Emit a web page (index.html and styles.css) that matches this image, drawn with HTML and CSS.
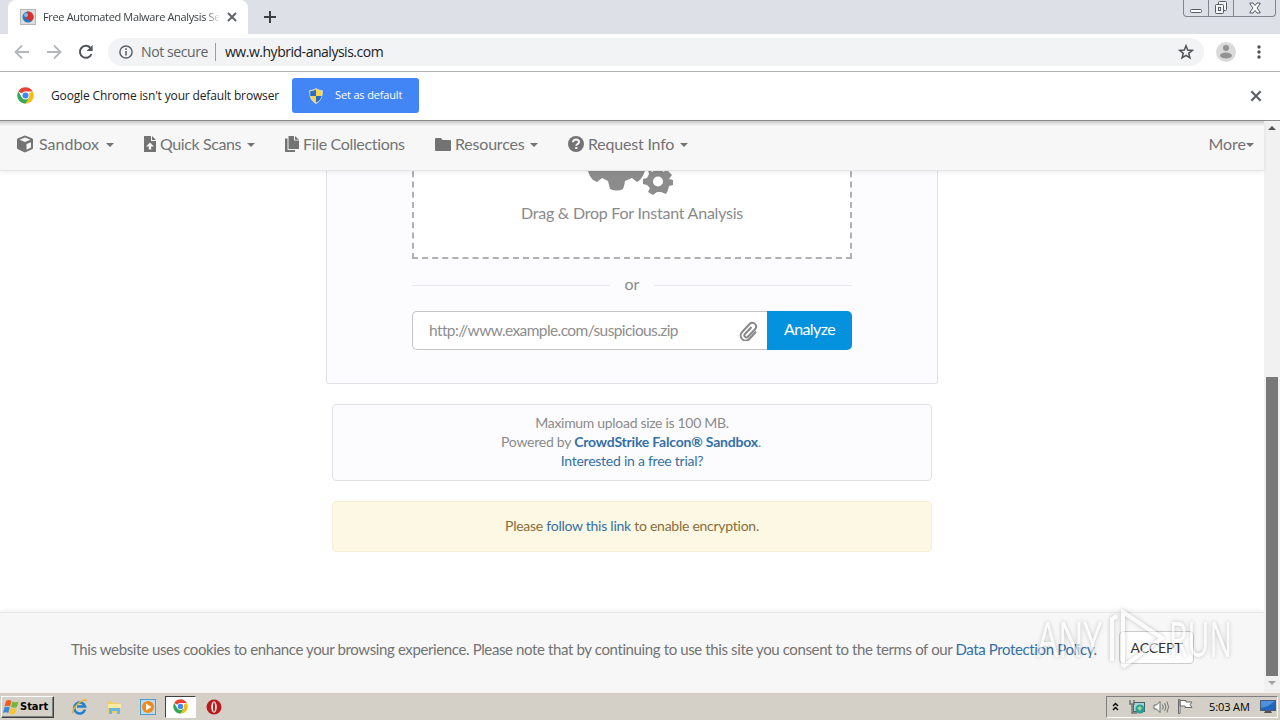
FILE: index.html
```html
<!DOCTYPE html>
<html lang="en">
<head>
  <meta charset="UTF-8" />
  <title>Free Automated Malware Analysis Service</title>
  <link rel="stylesheet" href="styles.css">
</head>
<body>
  <svg class="defs" width="0" height="0">
    <symbol id="chrome" viewBox="0 0 48 48">
      <circle cx="24" cy="24" r="23" fill="#fff"/>
      <path d="M24 24 4 12.500A23 23 0 0 1 44 12.500H24Z" fill="#ea4335"/>
      <path d="M24 24 44 12.500A23 23 0 0 1 24 47L34 30Z" fill="#fbbc05"/>
      <path d="M24 24 34 30 24 47A23 23 0 0 1 4 12.500L14 30Z" fill="#34a853"/>
      <circle cx="24" cy="24" r="11" fill="#fff"/>
      <circle cx="24" cy="24" r="8.500" fill="#4285f4"/>
    </symbol>
    <symbol id="close" viewBox="0 0 12 12">
      <path d="M2 2 10 10M10 2 2 10" stroke="#5f6368" stroke-width="1.900"/>
    </symbol>
  </svg>

  <div class="browser">
    <div class="tab-strip">
      <div class="tab">
        <svg class="favicon" viewBox="0 0 16 16">
          <rect x=".5" y=".5" width="15" height="15" fill="#dedcdc" stroke="#b9b5b5"/>
          <circle cx="8" cy="8" r="5.500" fill="#2479c4"/>
          <path d="M7 2.500a5.500 5.500 0 0 1 4 10c-1-2-5-2-6-4.500 2 1 4-1 2-5.500Z" fill="#d9302c"/>
          <circle cx="6" cy="6" r="2" fill="#79c0ec"/>
        </svg>
        <span class="tab-title">Free Automated Malware Analysis Se</span>
        <svg class="tab-close" viewBox="0 0 12 12"><use href="#close"/></svg>
      </div>
      <svg class="new-tab" viewBox="0 0 12 12"><path d="M6 0V12M0 6H12" stroke="#3c4043" stroke-width="2"/></svg>
      <div class="window-buttons">
        <span class="win-btn"><svg width="14" height="14" viewBox="0 0 14 14"><rect x="1.500" y="8.500" width="11" height="3" rx="1" fill="#fff" stroke="#555a63"/></svg></span>
        <span class="win-btn"><svg width="14" height="14" viewBox="0 0 14 14" fill="#f4f5f7" stroke="#555a63"><rect x="4.500" y=".5" width="8" height="9" rx="1"/><rect x="1.500" y="3.500" width="8" height="9" rx="1"/><rect x="4.500" y="6.500" width="2" height="3"/></svg></span>
        <span class="win-btn win-close"><svg width="12" height="12" viewBox="0 0 12 12"><path d="M1 1H4L6 3.500 8 1H11V2L8 6 11 10V11H8L6 8.500 4 11H1V10L4 6 1 2Z" fill="#fff" stroke="#555a63"/></svg></span>
      </div>
    </div>

    <div class="toolbar">
      <svg class="tool" viewBox="0 0 16 16"><path d="M15 8H2M8 1.500 1.500 8 8 14.500" fill="none" stroke="#b4b7ba" stroke-width="1.800"/></svg>
      <svg class="tool" viewBox="0 0 16 16"><path d="M1 8H14M8 1.500 14.500 8 8 14.500" fill="none" stroke="#b4b7ba" stroke-width="1.800"/></svg>
      <svg class="tool" viewBox="0 0 16 16"><path d="M13.500 10A6 6 0 1 1 12.300 3.700" fill="none" stroke="#505357" stroke-width="2"/><path d="M14.600 1V7H8.600Z" fill="#505357"/></svg>
      <div class="omnibox">
        <svg class="info" viewBox="0 0 14 14"><circle cx="7" cy="7" r="6.100" fill="none" stroke="#5f6368" stroke-width="1.500"/><path d="M7 6V10.500M7 3.300V5" stroke="#5f6368" stroke-width="1.600"/></svg>
        <span class="not-secure">Not secure</span>
        <span class="url">ww.w.hybrid-analysis.com</span>
        <svg class="star" viewBox="0 0 16 16"><path d="M8 1.800 9.700 6.100 14.300 6.400 10.700 9.300 11.900 13.800 8 11.300 4.100 13.800 5.300 9.300 1.700 6.400 6.300 6.100Z" fill="none" stroke="#505357" stroke-width="1.500"/></svg>
      </div>
      <svg class="avatar" viewBox="0 0 20 20"><circle cx="10" cy="10" r="10" fill="#dadada"/><circle cx="10" cy="6" r="3" fill="#929292"/><ellipse cx="10" cy="13.500" rx="6" ry="3" fill="#929292"/></svg>
      <svg class="menu" viewBox="0 0 4 14" fill="#505357"><circle cx="2" cy="2" r="1.700"/><circle cx="2" cy="7" r="1.700"/><circle cx="2" cy="12" r="1.700"/></svg>
    </div>

    <div class="infobar">
      <svg class="chrome-icon" viewBox="0 0 48 48"><use href="#chrome"/></svg>
      <span class="infobar-text">Google Chrome isn't your default browser</span>
      <span class="default-btn">
        <svg width="14" height="16" viewBox="0 0 14 16"><path d="M7 .5C5 2 3 2.500 .7 2.500 .5 8 2 13 7 15.500 12 13 13.500 8 13.300 2.500 11 2.500 9 2 7 .5Z" fill="#f7d64a" stroke="#d5dbe6"/><path d="M7 1.500V8H1.300Q1 5 1.300 3.200 5 3 7 1.500ZM7 8H12.700Q11.500 12.500 7 14.700Z" fill="#2c6cc9"/></svg>
        <span class="default-label">Set as default</span>
      </span>
      <svg class="infobar-close" viewBox="0 0 12 12"><use href="#close"/></svg>
    </div>

    <div class="viewport">
      <div class="page">
        <nav class="navbar">
          <span class="nav-item sandbox">
            <svg width="18" height="18" viewBox="0 0 18 18"><path d="M9 1 16.500 4V13.500L9 17 1.500 13.500V4Z" fill="#737373" stroke="#737373" stroke-linejoin="round"/><path d="M9 2.500 14.500 4.700 9 7 3.500 4.700Z" fill="#f7f7f7"/><path d="M10.500 9 15 7.200V12.500L10.500 14.800Z" fill="#f7f7f7"/></svg>
            <span class="label">Sandbox</span><i class="caret"></i>
          </span>
          <span class="nav-item scans">
            <svg width="12" height="16" viewBox="0 0 12 16"><path d="M0 0H7V5H12V16H0Z" fill="#737373"/><path d="M8 0 12 4H8Z" fill="#737373"/><path d="M6 6.500 10 10.500H7.200V13.500H4.800V10.500H2Z" fill="#f7f7f7"/></svg>
            <span class="label">Quick Scans</span><i class="caret"></i>
          </span>
          <span class="nav-item files">
            <svg width="14" height="16" viewBox="0 0 14 16" fill="#737373"><path d="M0 2.500H2.500V14H10V16H0Z"/><path d="M3.500 0H9V4.500H14V13H3.500Z"/><path d="M10 0 14 3.700H10Z"/></svg>
            <span class="label">File Collections</span>
          </span>
          <span class="nav-item resources">
            <svg width="16" height="13" viewBox="0 0 16 13"><path d="M0 1Q0 0 1 0H6L7.500 2H15Q16 2 16 3V12Q16 13 15 13H1Q0 13 0 12Z" fill="#737373"/></svg>
            <span class="label">Resources</span><i class="caret"></i>
          </span>
          <span class="nav-item request">
            <svg width="16" height="16" viewBox="0 0 16 16"><circle cx="8" cy="8" r="8" fill="#737373"/><path d="M5 6.200Q5.200 3.500 8 3.500 11 3.500 11 6 11 7.300 9.400 8.100 8.300 8.600 8.300 9.800" fill="none" stroke="#f7f7f7" stroke-width="2"/><path d="M7.200 11H9.400V13H7.200Z" fill="#f7f7f7"/></svg>
            <span class="label">Request Info</span><i class="caret"></i>
          </span>
          <span class="nav-item more"><span class="label">More</span><i class="caret"></i></span>
        </nav>

        <main class="content">
          <section class="upload">
            <div class="dropzone">
              <svg class="gears" viewBox="0 0 86 24">
                <path d="M0 0H57Q55 6 52 9L49 11 44 7 37 10Q36 16 35 18Q29 21 22 18L20 10 14 7 9 11 5 9Q1 5 0 0Z" fill="#8c8c8c"/>
                <path d="M66-3H74L75 1 79-1 84 4 81 8 85 9V14L81 15 80 19 78 23 73 21H69L65 24 60 21 62 17 59 14 55 13V8L59 7 61 3 60-1 65 1Z" fill="#8c8c8c"/>
                <circle cx="70" cy="10.500" r="5" fill="#fff"/>
              </svg>
              <p class="drop-text">Drag &amp; Drop For Instant Analysis</p>
            </div>
            <div class="divider"><span>or</span></div>
            <div class="url-form">
              <div class="url-input">
                <span class="placeholder">http://www.example.com/suspicious.zip</span>
                <svg class="clip" viewBox="0 0 18 20"><path d="M12 6 5.500 13A2 2 0 0 0 8.400 15.800L15.800 8A3.800 3.800 0 0 0 10.300 2.800L2.600 11A5 5 0 0 0 9.800 18L16.500 10.800" fill="none" stroke="#888" stroke-width="2"/></svg>
              </div>
              <span class="analyze">Analyze</span>
            </div>
          </section>

          <section class="notice">
            <p class="max">Maximum upload size is 100 MB.</p>
            <p class="powered">Powered by <b>CrowdStrike Falcon® Sandbox</b>.</p>
            <p class="trial">Interested in a free trial?</p>
          </section>

          <section class="warning"><p>Please <a>follow this link</a> to enable encryption.</p></section>
        </main>

        <div class="cookie-bar">
          <p class="cookie-text">This website uses cookies to enhance your browsing experience. Please note that by continuing to use this site you consent to the terms of our <a>Data Protection Policy</a>.</p>
          <span class="accept">ACCEPT</span>
        </div>
      </div>
      <div class="scrollbar">
        <i class="arrow up"></i>
        <div class="thumb"></div>
        <i class="arrow down"></i>
      </div>
    </div>
  </div>

  <div class="taskbar">
    <div class="start">
      <svg width="17" height="16" viewBox="0 0 17 16"><path d="M3 2Q6 0 8.500 2L7 7.500Q4 6 1.500 7.500Z" fill="#ee5a28"/><path d="M9.300 2.500Q12 4 15.500 2.500L14 8Q11 9.500 8 8Z" fill="#74b83b"/><path d="M1.300 8.500Q4 7 6.800 8.500L5.300 14Q3 12.500 0 14Z" fill="#3f88d8"/><path d="M7.700 9Q10.500 10.500 13.700 9L12 14.500Q9 16 6.200 14.500Z" fill="#f8c52c"/></svg>
      <span>Start</span>
    </div>
    <div class="quick-launch">
      <span class="task"><svg width="16" height="16" viewBox="0 0 16 16"><path d="M13 10.500A5.500 5.500 0 1 1 13 7.500H5" fill="none" stroke="#257fd0" stroke-width="2.600"/><path d="M1.500 14.500C-2 11 10-1 15 1.500" fill="none" stroke="#e7b52d" stroke-width="1.500"/></svg></span>
      <span class="task"><svg width="16" height="16" viewBox="0 0 16 16"><path d="M1 2H6L7 4H14V14H1Z" fill="#edcf69"/><path d="M2 5H15V9H2Z" fill="#fae9a2"/><path d="M3 15V9H14V15H11V12H6V15Z" fill="#69b7e0"/></svg></span>
      <span class="task"><svg width="16" height="16" viewBox="0 0 16 16"><rect x=".5" y=".5" width="15" height="15" fill="#b9dcf4" stroke="#4f9bd5"/><circle cx="8" cy="8" r="6" fill="#f28a19"/><path d="M6 4.500 11.500 8 6 11.500Z" fill="#fff"/></svg></span>
      <span class="task active"><svg width="15" height="15" viewBox="0 0 48 48"><use href="#chrome"/></svg></span>
      <span class="task"><svg width="16" height="16" viewBox="0 0 16 16"><circle cx="8" cy="8" r="7.500" fill="#b91a1c"/><ellipse cx="8" cy="8" rx="2.800" ry="5.800" fill="#f3e9e9"/><ellipse cx="8" cy="8" rx="1" ry="4.800" fill="#b91a1c"/></svg></span>
    </div>
    <div class="tray">
      <svg width="7" height="9" viewBox="0 0 7 9"><path d="M1 4 3.500 1.500 6 4M1 8 3.500 5.500 6 8" fill="none" stroke="#000" stroke-width="1.400"/></svg>
      <svg class="net" width="17" height="16" viewBox="0 0 17 16"><rect x="4.500" y="3.500" width="11" height="9" fill="#a6d6d4" stroke="#4b6265"/><path d="M1 1V5H5V1M3 5V14H8" fill="none" stroke="#6c716c" stroke-width="1.400"/><circle cx="11" cy="10" r="4.500" fill="#299c96"/><path d="M8 9 11 7 13 9 11 12Z" fill="#8ddc9b"/></svg>
      <svg class="sound" width="17" height="14" viewBox="0 0 17 14"><path d="M1 5H3.500L7 1.500V12.500L3.500 9H1Z" fill="#fff" stroke="#696969"/><path d="M9.500 4.500Q11 7 9.500 9.500M11.700 3Q14 7 11.700 11M14 1.500Q17 7 14 12.500" fill="none" stroke="#777"/></svg>
      <svg class="flag" width="16" height="15" viewBox="0 0 16 15"><path d="M1.500 .5H3V14.500H1.500ZM3 1.500H9V3H15L13 5.500 15 8.500H8V7H3Z" fill="#fff" stroke="#696969"/></svg>
      <span class="clock">5:03 AM</span>
      <svg class="desktop" width="16" height="14" viewBox="0 0 16 14"><rect x=".5" y=".5" width="15" height="10" fill="#2367bd" stroke="#4b5c78"/><path d="M1 1H15L8 6 1 8Z" fill="#4d91de"/><path d="M5 11H11L12 13H4Z" fill="#555"/></svg>
    </div>
  </div>

  <svg class="watermark" viewBox="0 0 200 66">
    <g class="wm-text">
      <text x="1" y="50" textLength="65" lengthAdjust="spacingAndGlyphs">ANY</text>
      <text x="133" y="50" textLength="63" lengthAdjust="spacingAndGlyphs">RUN</text>
    </g>
    <path class="wm-line" d="M76 54V12L81 9M87 60V5L126 31 87 60"/>
  </svg>
</body>
</html>
```
FILE: styles.css
```css
* {
  margin: 0;
  padding: 0;
  box-sizing: border-box;
}

body {
  width: 1280px;
  height: 720px;
  overflow: hidden;
  display: flex;
  flex-direction: column;
  font-family: 'Open Sans', sans-serif;
  background: #fff;
  position: relative;
}

svg {
  display: block;
  flex: none;
}

span, p {
  white-space: nowrap;
}

.defs {
  position: absolute;
}

.browser {
  height: 692px;
  display: flex;
  flex-direction: column;
}

/* tabs */
.tab-strip {
  height: 34px;
  background: #dde1e7;
  display: flex;
  align-items: center;
  padding-left: 8px;
}

.tab {
  width: 240px;
  height: 34px;
  background: #fff;
  border-radius: 8px 8px 0 0;
  display: flex;
  align-items: center;
  padding: 0 9px 0 12px;
}

.favicon {
  width: 16px;
  height: 16px;
}

.tab-title {
  width: 176px;
  margin-left: 7px;
  padding-bottom: 1px;
  font-size: 11px;
  letter-spacing: -0.35px;
  color: #3c4043;
  -webkit-mask-image: linear-gradient(to right, #000 162px, transparent 178px);
}

.tab-close {
  width: 12px;
  height: 12px;
  margin-left: 7px;
}

.new-tab {
  width: 12px;
  height: 12px;
  margin-left: 16px;
}

.window-buttons {
  display: flex;
  align-self: flex-start;
  margin-left: auto;
  margin-right: 4px;
  height: 17px;
  border: 1px solid #81858d;
  border-top: none;
  border-radius: 0 0 4px 4px;
}

.win-btn {
  width: 25px;
  display: flex;
  justify-content: center;
  align-items: center;
  border-right: 1px solid #81858d;
}

.win-close {
  width: 41px;
  border-right: none;
}

/* toolbar */
.toolbar {
  height: 38px;
  background: #fff;
  border-bottom: 1px solid #b0b3b1;
  display: flex;
  align-items: center;
  padding: 0 19px 1px 14px;
}

.tool {
  width: 16px;
  height: 16px;
  margin-right: 16px;
}

.omnibox {
  width: 1096px;
  height: 28px;
  margin-left: -2px;
  border-radius: 14px;
  background: #f1f3f4;
  display: flex;
  align-items: center;
  padding: 0 10px 0 11px;
  font-size: 14px;
}

.info {
  width: 14px;
  height: 14px;
}

.not-secure {
  margin-left: 8px;
  width: 75px;
  line-height: 18px;
  border-right: 1px solid #9a9da1;
  letter-spacing: -0.4px;
  color: #5f6368;
}

.url {
  margin-left: 9px;
  padding-bottom: 1px;
  letter-spacing: -0.48px;
  color: #202124;
}

.star {
  width: 16px;
  height: 16px;
  margin-left: auto;
}

.avatar {
  width: 20px;
  height: 20px;
  margin-left: 12px;
}

.menu {
  width: 4px;
  height: 14px;
  margin-left: auto;
}

/* default browser prompt */
.infobar {
  height: 49px;
  background: #fff;
  display: flex;
  align-items: center;
  padding: 0 18px 1px 17px;
  border-bottom: 1px solid #8f8d8f;
}

.chrome-icon {
  width: 17px;
  height: 17px;
}

.infobar-text {
  width: 228px;
  margin-left: 17px;
  font-size: 12px;
  letter-spacing: -0.15px;
  color: #202124;
}

.default-btn {
  width: 127px;
  height: 35px;
  margin-left: 13px;
  border-radius: 3px;
  background: #4285f4;
  display: flex;
  align-items: center;
  padding-left: 17px;
}

.default-label {
  margin-left: 12px;
  padding-bottom: 2px;
  font-size: 11px;
  letter-spacing: -0.15px;
  color: #fff;
}

.infobar-close {
  width: 14px;
  height: 14px;
  margin-left: auto;
  margin-right: -1px;
}

.viewport {
  height: 571px;
  display: flex;
}

.page {
  width: 1264px;
  display: flex;
  flex-direction: column;
  font-family: Lato, sans-serif;
}

/* navbar */
.navbar {
  height: 50px;
  background: linear-gradient(#c8c8c8, #f7f7f7 5px);
  border-bottom: 1px solid #e4e4e4;
  box-shadow: 0 1px 5px rgba(0, 0, 0, 0.08);
  display: flex;
  align-items: center;
  gap: 30px;
  padding: 0 10px 3px 16px;
  font-size: 16px;
  color: #737373;
  position: relative;
  z-index: 1;
}

.nav-item {
  display: flex;
  align-items: center;
}

.nav-item svg {
  margin-right: 4px;
}

.label {
  padding-bottom: 2px;
}

.sandbox { width: 98px; }
.sandbox svg { margin-right: 5px; }
.scans { width: 111px; letter-spacing: -0.4px; }
.files { width: 120px; letter-spacing: -0.33px; }
.resources { width: 103px; letter-spacing: -0.2px; }
.request { width: 120px; letter-spacing: -0.2px; }
.more { margin-left: auto; }

.caret {
  margin-left: auto;
  border: 4px solid transparent;
  border-top-color: #737373;
  border-bottom: none;
  position: relative;
  top: 1px;
}

/* upload */
.content {
  height: 441px;
  overflow: hidden;
  display: flex;
  flex-direction: column;
  align-items: center;
}

.upload {
  width: 612px;
  height: 213px;
  background: #fcfcfe;
  border: 1px solid #e0e1e5;
  border-top: none;
  border-radius: 0 0 3px 3px;
  padding: 0 85px;
}

.dropzone {
  height: 98px;
  margin-top: -10px;
  padding-top: 8px;
  background: #fff;
  border: 2px dashed #b0b0b0;
  display: flex;
  flex-direction: column;
  align-items: center;
}

.gears {
  width: 86px;
  height: 24px;
  margin-right: 2px;
}

.drop-text {
  margin-top: 7px;
  font-size: 16px;
  line-height: 22px;
  letter-spacing: -0.23px;
  color: #8a8a8a;
}

.divider {
  height: 52px;
  display: flex;
  align-items: center;
  gap: 15px;
  font-size: 16px;
  color: #8a8a8a;
}

.divider span {
  padding-bottom: 3px;
}

.divider::before,
.divider::after {
  content: '';
  flex: 1;
  height: 1px;
  background: #e8e8ec;
}

.url-form {
  height: 39px;
  display: flex;
}

.url-input {
  width: 355px;
  background: #fff;
  border: 1px solid #c4c4c4;
  border-right: none;
  border-radius: 5px 0 0 5px;
  display: flex;
  align-items: center;
  justify-content: space-between;
  padding: 0 9px 0 16px;
  font-size: 15.5px;
  letter-spacing: -0.6px;
  color: #8e8e8e;
}

.placeholder {
  padding-bottom: 1px;
}

.clip {
  width: 19px;
  height: 20px;
}

.analyze {
  flex: 1;
  background: #0492de;
  border-radius: 0 5px 5px 0;
  color: #fff;
  font-size: 16px;
  letter-spacing: -0.6px;
  line-height: 36px;
  text-align: center;
}

/* notices */
.notice {
  width: 600px;
  height: 77px;
  margin-top: 20px;
  padding-top: 8px;
  background: #fcfcfe;
  border: 1px solid #e0e1e5;
  border-radius: 4px;
  text-align: center;
  font-size: 14px;
  line-height: 19px;
  letter-spacing: -0.25px;
  color: #8a8a8a;
}

.notice b, .trial, a {
  color: #3470a6;
}

.notice b {
  letter-spacing: -0.2px;
}

.powered {
  padding-right: 2px;
}

.max {
  letter-spacing: -0.31px;
}

.warning {
  width: 600px;
  height: 51px;
  margin-top: 20px;
  background: #fcf8e3;
  border: 1px solid #f7eed6;
  border-radius: 4px;
  text-align: center;
  font-size: 14px;
  line-height: 47px;
  letter-spacing: -0.26px;
  color: #8a6d3b;
}

/* cookies */
.cookie-bar {
  flex: 1;
  background: #f7f7f7;
  border-top: 1px solid #e8e8e8;
  box-shadow: 0 -1px 5px rgba(0, 0, 0, 0.08);
  display: flex;
  align-items: center;
  padding: 0 70px 6px 71px;
  font-size: 15px;
  letter-spacing: -0.38px;
  color: #737373;
}

.cookie-text {
  width: 1028px;
  padding-bottom: 1px;
}

.accept {
  width: 75px;
  height: 33px;
  margin-left: 20px;
  margin-bottom: 4px;
  background: #fff;
  border: 1px solid #ccc;
  border-radius: 4px;
  font-size: 14px;
  letter-spacing: -0.1px;
  line-height: 31px;
  text-align: center;
  color: #333;
}

.scrollbar {
  width: 16px;
  background: #f1f1f1;
  display: flex;
  flex-direction: column;
  align-items: center;
}

.arrow {
  border: 4px solid transparent;
}

.up {
  margin-top: 5px;
  border-bottom: 4px solid #505050;
  border-top: none;
}

.thumb {
  width: 12px;
  height: 299px;
  margin-top: 247px;
  background: #787878;
}

.down {
  margin-top: 5px;
  border-top: 4px solid #a3a3a3;
  border-bottom: none;
}

/* taskbar */
.taskbar {
  height: 28px;
  background: #d4d0c8;
  border-top: 1px solid #f3f1ed;
  display: flex;
  align-items: center;
  padding: 0 2px 0 1px;
}

.start {
  width: 53px;
  height: 22px;
  border: 1px solid #fff;
  border-right-color: #404040;
  border-bottom-color: #404040;
  box-shadow: inset -1px -1px #808080;
  display: flex;
  align-items: center;
  font: bold 11px 'DejaVu Sans Condensed', 'DejaVu Sans', sans-serif;
  padding-left: 1px;
}

.quick-launch {
  display: flex;
  align-items: center;
  margin-left: 9px;
}

.task {
  width: 34px;
  height: 22px;
  display: flex;
  align-items: center;
  justify-content: center;
}

.active {
  width: 31px;
  margin: 0 1px 0 0;
  background: #fff;
  border: 1px solid #404040;
  border-right-color: #fff;
  border-bottom-color: #fff;
}

.tray {
  width: 172px;
  height: 22px;
  margin-left: auto;
  border: 1px solid #808080;
  border-right-color: #fff;
  border-bottom-color: #fff;
  display: flex;
  align-items: center;
  padding-left: 5px;
}

.net { margin-left: 10px; }
.sound { margin-left: 7px; }
.flag { margin-left: 7px; }

.clock {
  width: 41px;
  margin-left: 16px;
  font-size: 11px;
  letter-spacing: -0.1px;
  color: #000;
}

.desktop {
  margin-left: 10px;
}

.watermark {
  position: absolute;
  z-index: 2;
  left: 1036px;
  top: 607px;
  width: 200px;
  height: 66px;
  overflow: visible;
  filter: drop-shadow(0 0 2px rgba(0, 0, 0, 0.4));
  opacity: 0.55;
}

.wm-text {
  font: 50px 'Open Sans', sans-serif;
  fill: #fff;
}

.wm-line {
  fill: none;
  stroke: #fff;
  stroke-width: 4;
}
```
